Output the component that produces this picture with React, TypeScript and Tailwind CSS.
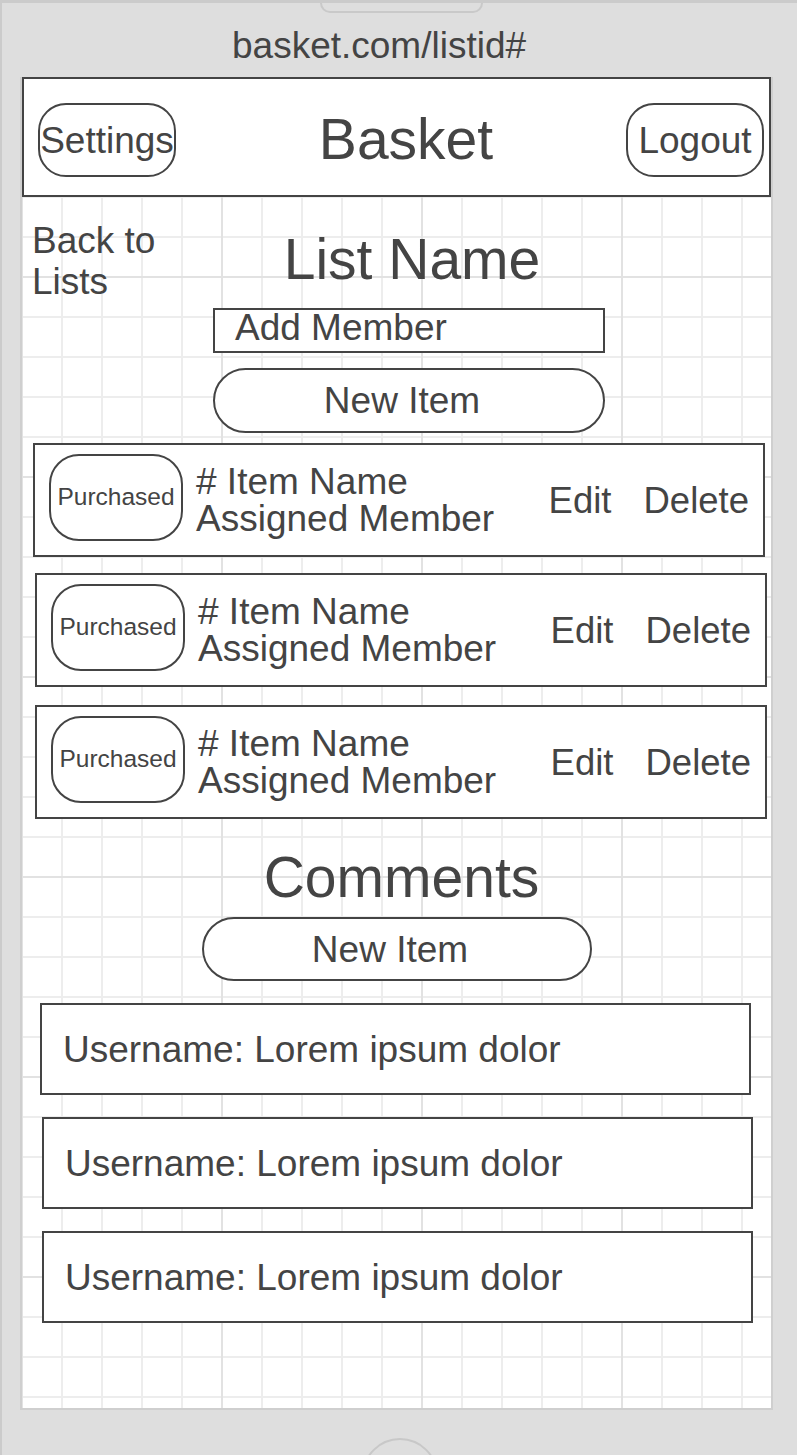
const items = [
  { ml: "ml-[11px]", mt: "mt-[10px]" },
  { ml: "ml-[13px]", mt: "mt-[16px]" },
  { ml: "ml-[13px]", mt: "mt-[18px]" },
];

const comments = [
  { ml: "ml-[18px]" },
  { ml: "ml-[20px]" },
  { ml: "ml-[20px]" },
];

function ItemRow({ ml, mt }: { ml: string; mt: string }) {
  return (
    <div
      className={`${ml} ${mt} w-[732px] h-[114px] flex items-center border-2 border-[#444] bg-white`}
    >
      <div className="self-start mt-[9px] ml-[14px] w-[134px] h-[87px] rounded-[30px] border-2 border-[#444] flex items-center justify-center text-[24.5px] leading-none">
        Purchased
      </div>
      <div className="ml-[13px] flex-1 text-[37px] leading-[37px]">
        <p># Item Name</p>
        <p>Assigned Member</p>
      </div>
      <div className="flex gap-[32px] mr-[14px] text-[36.5px] leading-[41px]">
        <span>Edit</span>
        <span>Delete</span>
      </div>
    </div>
  );
}

export default function App() {
  return (
    <div className="w-[797px] h-[1455px] overflow-hidden bg-[#dedede] border-l-2 border-t-[3px] border-[#cbcbcb] font-['Liberation_Sans',Arial,sans-serif] text-[#444]">
      {/* phone notch */}
      <div className="ml-[318px] w-[163px] h-[10px] border-x-2 border-b-2 border-[#c9c9c9] rounded-b-[10px]" />

      <div className="mt-[12px] pl-[230px] text-[37px] leading-[42px]">basket.com/listid#</div>

      {/* screen */}
      <div className="mt-[10px] ml-[18px] w-[753px] h-[1333px] border-x-2 border-b-2 border-[#cfcfcf] bg-white [background-image:linear-gradient(to_right,#e2e2e2_2px,transparent_2px),linear-gradient(to_bottom,#e2e2e2_2px,transparent_2px),linear-gradient(to_right,#ededed_2px,transparent_2px),linear-gradient(to_bottom,#ededed_2px,transparent_2px)] [background-size:200px_200px,200px_200px,40px_40px,40px_40px] [background-position:199px_199px,199px_199px,39px_39px,39px_39px]">
        <header className="h-[120px] border-2 border-[#444] bg-white flex items-start justify-between pl-[14px] pr-[5px] pt-[24px]">
          <div className="w-[138px] h-[74px] rounded-[28px] border-2 border-[#444] flex items-center justify-center text-[37px] leading-none">
            Settings
          </div>
          <h1 className="flex-1 mt-[4px] pl-[10px] text-center text-[57px] leading-[64px]">Basket</h1>
          <div className="w-[138px] h-[74px] rounded-[28px] border-2 border-[#444] flex items-center justify-center text-[37px] leading-none">
            Logout
          </div>
        </header>

        <div className="flex">
          <div className="w-[191px] pl-[10px] pt-[23px] text-[37px] leading-[41px]">
            Back to
            <br />
            Lists
          </div>
          <div className="w-[392px] pt-[30px] flex flex-col">
            <h2 className="pl-[6px] text-center text-[57px] leading-[64px]">List Name</h2>
            <div className="mt-[17px] h-[45px] border-2 border-[#444] bg-white pl-[20px] text-[37px] leading-[36px]">
              Add Member
            </div>
            <div className="mt-[15px] h-[65px] rounded-full border-2 border-[#444] bg-white flex items-center justify-center pr-[14px] text-[37px] leading-none">
              New Item
            </div>
          </div>
        </div>

        {items.map((it, idx) => (
          <ItemRow key={idx} ml={it.ml} mt={it.mt} />
        ))}

        <h2 className="mt-[26px] pl-[10px] text-center text-[57px] leading-[64px]">Comments</h2>
        <div className="mt-[8px] ml-[180px] w-[390px] h-[64px] rounded-full border-2 border-[#444] bg-white flex items-center justify-center pr-[14px] text-[37px] leading-none">
          New Item
        </div>

        {comments.map((c, idx) => (
          <div
            key={idx}
            className={`${c.ml} mt-[22px] w-[711px] h-[92px] border-2 border-[#444] bg-white flex items-center pl-[21px] text-[37px] leading-[41px]`}
          >
            Username: Lorem ipsum dolor
          </div>
        ))}
      </div>

      {/* home button */}
      <div className="mt-[28px] ml-[360px] w-[76px] h-[76px] rounded-full border-2 border-[#c8c8c8]" />
    </div>
  );
}
